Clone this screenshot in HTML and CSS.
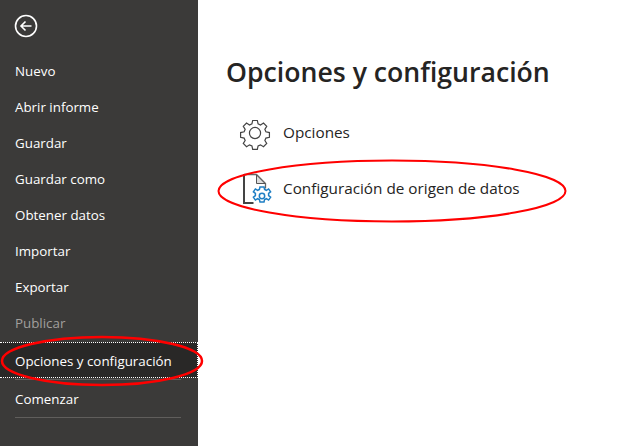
FILE: index.html
```html
<!DOCTYPE html>
<html lang="es">
<head>
<meta charset="utf-8">
<title>Opciones y configuración</title>
<link rel="stylesheet" href="styles.css">
</head>
<body>
<div class="app">
  <nav class="side">
    <div class="back">
      <svg width="24" height="24" viewBox="0 0 24 24" fill="none" stroke="#fff"><circle cx="12" cy="12" r="10.500" stroke-width="1.600"/><path d="M17.500 12H7M11.500 7.500 7 12l4.500 4.500" stroke-width="1.600"/></svg>
    </div>
    <ul class="menu">
      <li class="item">Nuevo</li>
      <li class="item">Abrir informe</li>
      <li class="item">Guardar</li>
      <li class="item">Guardar como</li>
      <li class="item">Obtener datos</li>
      <li class="item">Importar</li>
      <li class="item">Exportar</li>
      <li class="item disabled">Publicar</li>
      <li class="item active">Opciones y configuración</li>
      <li class="rule first"></li>
      <li class="item start">Comenzar</li>
      <li class="rule"></li>
    </ul>
  </nav>
  <main class="main">
    <h1 class="title">Opciones y configuración</h1>
    <div class="option">
      <svg class="opt-icon" width="36" height="36" viewBox="0 0 36 36" fill="none" stroke="#444" stroke-width="1.300"><g transform="translate(1.200 2.300) scale(.93)"><circle cx="17" cy="18" r="6"/><path d="M14.500 4.500h5l.8 3.700 2.600 1.100 3.200-2 3.500 3.500-2 3.200 1.100 2.600 3.800.9v5l-3.800.9-1.100 2.600 2 3.200-3.500 3.500-3.200-2-2.600 1.100-.8 3.700h-5l-.8-3.700-2.600-1.100-3.200 2-3.500-3.500 2-3.200-1.100-2.600-3.800-.9v-5l3.800-.9 1.100-2.600-2-3.200 3.500-3.500 3.200 2 2.600-1.100z"/></g></svg>
      <span>Opciones</span>
    </div>
    <div class="option">
      <svg class="opt-icon" width="36" height="36" viewBox="0 0 36 36" fill="none">
        <path d="M6 4.500h12.500l9 9v5" stroke="#666" stroke-width="1.300"/>
        <path d="M18.500 5v8.500h8.500z" fill="#ddd" stroke="#555"/>
        <path d="M6 4v29h9.500" stroke="#444" stroke-width="2"/>
        <g stroke="#1f7fc4" stroke-width="1.500" fill="#fff"><path d="M22 17h4l.6 2.500 1.800.8 2.200-1.400 2 2.900-2 1.500v2.400l2 1.500-2 2.900-2.200-1.400-1.800.8-.6 2.500h-4l-.6-2.500-1.800-.8-2.200 1.400-2-2.900 2-1.500v-2.400l-2-1.500 2-2.900 2.200 1.400 1.800-.8z"/><circle cx="24" cy="26" r="2.700"/></g>
      </svg>
      <span>Configuración de origen de datos</span>
    </div>
  </main>
</div>
<svg class="marks" width="633" height="446" viewBox="0 0 633 446" fill="none" stroke="#f00" stroke-width="2">
  <ellipse class="thick" cx="102" cy="361" rx="100" ry="24"/>
  <ellipse cx="392" cy="191" rx="173.500" ry="30.500"/>
</svg>
</body>
</html>
```

FILE: styles.css
```css
* { box-sizing: border-box; }
html, body { margin: 0; height: 100%; overflow: hidden; background: #fff; }
body { font-family: "Open Sans", "Noto Sans", sans-serif; position: relative; }
.app { display: flex; height: 446px; }
.side { width: 198px; flex: none; background: #3b3a39; color: #fff; }
.back { height: 53px; padding: 14px 0 0 14px; }
.menu { list-style: none; margin: 0; padding: 0; font-size: 13.350px; }
.item { height: 36px; padding-left: 15px; line-height: 36px; white-space: nowrap; }
.disabled { color: #a19f9d; }
.active { margin-top: 1px; background: #292827; border-top: 1px dotted #fff; border-bottom: 1px dotted #fff; border-right: 1px dotted #fff; }
.start { height: 37px; line-height: 38px; }
.rule { height: 1px; margin: 0 17px 0 15px; background: #605e5c; }
.rule.first { margin-top: 1px; }
.main { flex: 1; padding: 54px 0 0 28px; color: #252423; }
.title { margin: 0 0 14px; font-size: 26.650px; line-height: 36px; font-weight: 600; white-space: nowrap; }
.option { display: flex; align-items: center; gap: 9px; height: 56px; font-size: 15.300px; }
.opt-icon { margin-left: 12px; flex: none; }
.marks { position: absolute; left: 0; top: 0; pointer-events: none; }
.thick { stroke-width: 2.500px; }
```
